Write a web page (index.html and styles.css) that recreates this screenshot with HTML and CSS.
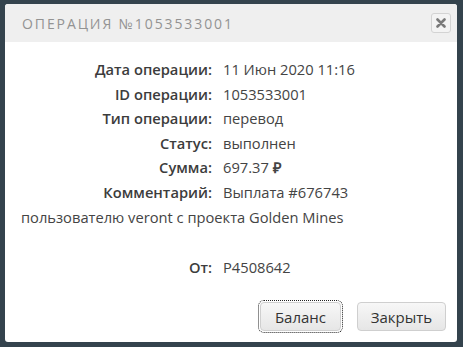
FILE: index.html
```html
<!DOCTYPE html>
<html lang="ru">
<head>
  <meta charset="UTF-8" />
  <title>Операция №1053533001</title>
  <link rel="stylesheet" href="styles.css">
</head>
<body>
  <div class="dialog">
    <div class="dialog-head">
      <span class="dialog-title">Операция №1053533001</span>
      <button class="close-x" title="Закрыть">
        <svg width="10" height="10" viewBox="0 0 10 10">
          <path d="M1.5 1.5 L8.5 8.5 M8.5 1.5 L1.5 8.5" stroke="#7a7a7a" stroke-width="2.6" stroke-linecap="round"/>
        </svg>
      </button>
    </div>

    <div class="dialog-body">
      <div class="row"><span class="label">Дата операции:</span>11 Июн 2020 11:16</div>
      <div class="row"><span class="label">ID операции:</span>1053533001</div>
      <div class="row"><span class="label">Тип операции:</span>перевод</div>
      <div class="row"><span class="label">Статус:</span>выполнен</div>
      <div class="row"><span class="label">Сумма:</span>697.37 <b class="rub">₽</b></div>
      <div class="row"><span class="label">Комментарий:</span>Выплата #676743 пользователю veront с проекта Golden Mines</div>
      <div class="row from"><span class="label">От:</span>P4508642</div>
    </div>

    <div class="dialog-foot">
      <button class="btn btn-balance">Баланс</button>
      <button class="btn btn-close">Закрыть</button>
    </div>
  </div>
</body>
</html>
```

FILE: styles.css
```css
body {
  margin: 0;
  background: #34434d;
  font-family: "Open Sans", Arial, sans-serif;
  color: #333;
  padding: 4px 6px 5px 5px;
}

.dialog {
  width: 452px;
  height: 338px;
  background: #fff;
  border-radius: 3px;
  display: flex;
  flex-direction: column;
  overflow: hidden;
}

.dialog-head {
  height: 38px;
  background: #efefef;
  display: flex;
  align-items: center;
  justify-content: space-between;
  padding: 0 6px 0 17px;
}

.dialog-title {
  text-transform: uppercase;
  color: #939393;
  font-size: 14px;
  letter-spacing: 1.9px;
  padding-top: 1px;
}

.close-x {
  width: 20px;
  height: 20px;
  padding: 0;
  border: 1px solid #d3d3d3;
  border-radius: 3px;
  background: #f3f3f3;
  display: flex;
  align-items: center;
  justify-content: center;
  cursor: pointer;
}

.dialog-body {
  flex: 1;
  padding: 15px 10px 0 16px;
  font-size: 14.7px;
  line-height: 24.6px;
  color: #444;
}

.label {
  display: inline-block;
  width: 191px;
  margin-right: 11px;
  text-align: right;
  font-weight: 600;
  color: #3c3c3c;
}

.rub {
  font-weight: 700;
}

.row.from {
  margin-top: 26px;
}

.dialog-foot {
  display: flex;
  justify-content: flex-end;
  gap: 16px;
  padding: 0 11px 11px 0;
}

.btn {
  height: 29px;
  padding: 0;
  font-family: "Open Sans", Arial, sans-serif;
  font-size: 15px;
  color: #333;
  border: 1px solid #cfcfcf;
  border-radius: 4px;
  background: linear-gradient(#f7f7f7, #e6e6e6);
  cursor: pointer;
}

.btn-balance {
  width: 81px;
  outline: 1px dotted #222;
  outline-offset: 1px;
}

.btn-close {
  width: 89px;
}
```
